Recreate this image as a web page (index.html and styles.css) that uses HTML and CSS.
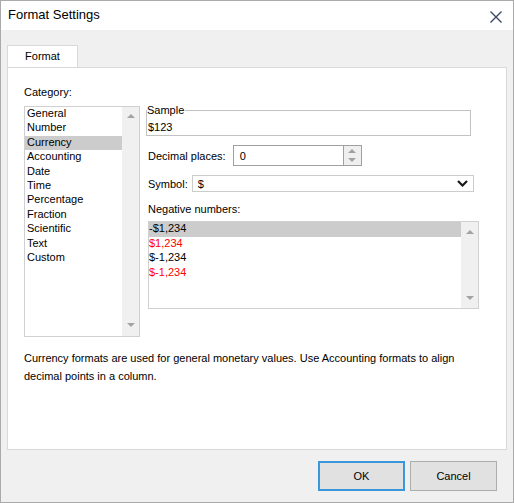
FILE: index.html
```html
<!DOCTYPE html>
<html lang="en">
<head>
<meta charset="UTF-8">
<meta name="viewport" content="width=device-width, initial-scale=1.0">
<title>Format Settings</title>
<link rel="stylesheet" href="styles.css">
</head>
<body>
<div class="dialog">
  <div class="titlebar">
    <span class="title">Format Settings</span>
    <svg class="close" width="12" height="12" viewBox="0 0 12 12">
      <path d="M0.5 0.5 L11.5 11.5 M11.5 0.5 L0.5 11.5" stroke="#3c4766" stroke-width="1.4" fill="none"/>
    </svg>
  </div>
  <div class="main">
    <div class="tabs"><div class="tab">Format</div></div>
    <div class="panel">
      <div class="label cat-label">Category:</div>
      <div class="columns">
        <div class="listbox category">
          <ul class="items">
            <li>General</li>
            <li>Number</li>
            <li class="selected">Currency</li>
            <li>Accounting</li>
            <li>Date</li>
            <li>Time</li>
            <li>Percentage</li>
            <li>Fraction</li>
            <li>Scientific</li>
            <li>Text</li>
            <li>Custom</li>
          </ul>
          <div class="scrollbar"><span class="arrow up"></span><span class="arrow down"></span></div>
        </div>
        <div class="right">
          <fieldset class="sample">
            <legend>Sample</legend>
            <div class="sample-value">$123</div>
          </fieldset>
          <div class="row">
            <span class="row-label decimal-label">Decimal places:</span>
            <div class="spin">
              <span class="spin-value">0</span>
              <div class="spin-btn"><span class="arrow up"></span><span class="arrow down"></span></div>
            </div>
          </div>
          <div class="row">
            <span class="row-label">Symbol:</span>
            <div class="select">
              <span>$</span>
              <svg class="chevron" width="11" height="7" viewBox="0 0 11 7">
                <polyline points="1,1 5.5,5.5 10,1" stroke="#1a1a1a" stroke-width="2.2" fill="none"/>
              </svg>
            </div>
          </div>
          <div class="label neg-label">Negative numbers:</div>
          <div class="listbox negative">
            <ul class="items">
              <li class="selected">-$1,234</li>
              <li class="red">$1,234</li>
              <li>$-1,234</li>
              <li class="red">$-1,234</li>
            </ul>
            <div class="scrollbar"><span class="arrow up"></span><span class="arrow down"></span></div>
          </div>
        </div>
      </div>
      <p class="desc">Currency formats are used for general monetary values. Use Accounting formats to align decimal points in a column.</p>
    </div>
  </div>
  <div class="buttons">
    <button class="btn default">OK</button>
    <button class="btn">Cancel</button>
  </div>
</div>
</body>
</html>
```

FILE: styles.css
```css
body {
  margin: 0;
  font-family: "Liberation Sans", Arial, sans-serif;
  font-size: 11px;
  color: #000;
  background: #f0f0f0;
}

.dialog {
  width: 514px;
  height: 503px;
  box-sizing: border-box;
  border: 1px solid #aaaaaa;
  background: #f0f0f0;
  display: flex;
  flex-direction: column;
}

/* title bar */
.titlebar {
  height: 29px;
  background: #fff;
  display: flex;
  align-items: center;
  justify-content: space-between;
  padding: 0 11px 0 7px;
}

.title {
  font-size: 13px;
  margin-top: -2px;
}

.close {
  margin-top: 2px;
}

.main {
  padding: 15px 6px 0 6px;
}

/* tab */
.tabs {
  display: flex;
}

.tab {
  width: 71px;
  height: 22px;
  box-sizing: border-box;
  border: 1px solid #d9d9d9;
  border-bottom: none;
  background: #fff;
  text-align: center;
  line-height: 21px;
}

.panel {
  height: 383px;
  box-sizing: border-box;
  border: 1px solid #d9d9d9;
  background: #fff;
  padding: 17px 16px 0 16px;
}

.label {
  line-height: 14px;
}

.cat-label {
  margin-bottom: 7px;
}

.columns {
  display: flex;
  align-items: flex-start;
  gap: 6px;
}

/* list boxes */
.listbox {
  display: flex;
  box-sizing: border-box;
  border: 1px solid #d0d0d0;
  background: #fff;
}

.listbox.category {
  width: 116px;
  height: 231px;
}

.listbox.negative {
  width: 331px;
  height: 88px;
  margin-left: 2px;
}

.items {
  flex: 1;
  list-style: none;
  margin: 0;
  padding: 0;
}

.items li {
  height: 14.4px;
  line-height: 12px;
  padding-left: 2px;
  box-sizing: border-box;
}

.negative .items li {
  padding-left: 0;
}

.items li.selected {
  background: #cccccc;
}

.negative .items li.selected {
  height: 15px;
}

.items li.red {
  color: #ff0000;
}

.scrollbar {
  width: 17px;
  background: #f0f0f0;
  display: flex;
  flex-direction: column;
  align-items: center;
  justify-content: space-between;
  padding: 7px 0 9px;
}

.negative .scrollbar {
  padding: 8px 0 8px;
}

.arrow {
  width: 0;
  height: 0;
  border-left: 4px solid transparent;
  border-right: 4px solid transparent;
}

.arrow.up {
  border-bottom: 4px solid #a3a3a3;
}

.arrow.down {
  border-top: 4px solid #a3a3a3;
}

/* right column */
.right {
  display: flex;
  flex-direction: column;
  margin-top: -3px;
}

.sample {
  width: 325px;
  box-sizing: border-box;
  margin: 0;
  padding: 0;
  border: 1px solid #c3c3c3;
}

.sample legend {
  padding: 0 1px 0 0;
  margin-left: 0;
  line-height: 14px;
}

.sample-value {
  line-height: 14px;
  padding: 3px 0 1px 1px;
}

.row {
  display: flex;
  align-items: center;
  margin-top: 9px;
  padding-left: 2px;
}

.row-label {
  margin-right: 4px;
}

.decimal-label {
  margin-right: 7px;
}

.spin {
  width: 129px;
  height: 21px;
  box-sizing: border-box;
  border: 1px solid #a0a0a0;
  display: flex;
}

.spin-value {
  flex: 1;
  padding-left: 6px;
  line-height: 20px;
}

.spin-btn {
  width: 17px;
  border-left: 1px solid #a0a0a0;
  background: #efefef;
  display: flex;
  flex-direction: column;
  align-items: center;
  justify-content: center;
  gap: 5px;
}

.select {
  width: 282px;
  height: 17px;
  box-sizing: border-box;
  border: 1px solid #cccccc;
  display: flex;
  align-items: center;
  justify-content: space-between;
  padding: 0 5px 0 5px;
}

.neg-label {
  margin-top: 10px;
  margin-bottom: 5px;
  padding-left: 2px;
}

.desc {
  margin: 12px 0 0;
  line-height: 18px;
}

/* footer */
.buttons {
  display: flex;
  justify-content: flex-end;
  gap: 5px;
  padding: 11px 16px 0 0;
}

.btn {
  width: 87px;
  height: 30px;
  box-sizing: border-box;
  font-family: inherit;
  font-size: 11px;
  background: #e1e1e1;
  border: 1px solid #adadad;
  padding: 0;
}

.btn.default {
  border: 2px solid #3a97db;
}
```
